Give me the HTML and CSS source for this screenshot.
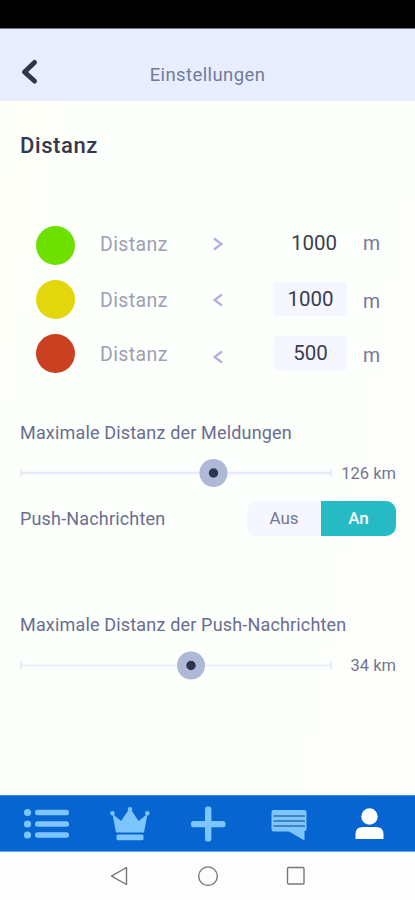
FILE: index.html
```html
<!DOCTYPE html>
<html lang="de">
<head>
<meta charset="utf-8">
<title>Einstellungen</title>
<link rel="stylesheet" href="styles.css">
</head>
<body>
<div class="screen">
  <div class="statusbar"></div>
  <header class="header">
    <svg class="back" width="20" height="28" viewBox="0 0 20 28"><path d="M15.500 4.500L5.500 14L15.500 23"/></svg>
    <h1 class="title">Einstellungen</h1>
  </header>
  <main class="content">
    <h2 class="heading">Distanz</h2>
    <section class="levels">
      <div class="level level-far">
        <span class="dot green"></span><span class="name">Distanz</span>
        <svg class="sign" width="10" height="14" viewBox="0 0 10 14"><path d="M1 1.500L8.500 7L1 12.500"/></svg>
        <span class="value">1000</span><span class="unit">m</span>
      </div>
      <div class="level level-mid">
        <span class="dot yellow"></span><span class="name">Distanz</span>
        <svg class="sign" width="10" height="14" viewBox="0 0 10 14"><path d="M9 1.500L1.500 7L9 12.500"/></svg>
        <span class="value field">1000</span><span class="unit">m</span>
      </div>
      <div class="level level-near">
        <span class="dot red"></span><span class="name">Distanz</span>
        <svg class="sign" width="10" height="14" viewBox="0 0 10 14"><path d="M9 1.500L1.500 7L9 12.500"/></svg>
        <span class="value field">500</span><span class="unit">m</span>
      </div>
    </section>
    <p class="label label-reports">Maximale Distanz der Meldungen</p>
    <div class="slider">
      <svg class="track" width="312" height="30" viewBox="0 0 312 30"><path class="line wide" d="M1 15H311"/><path class="tick" d="M1 11V19M311 11V19"/><circle class="knob" cx="193.500" cy="15" r="14"/><circle class="core" cx="193.500" cy="15" r="4.700"/></svg>
      <span class="amount">126 km</span>
    </div>
    <div class="push">
      <span class="label label-push">Push-Nachrichten</span>
      <div class="toggle"><span class="off">Aus</span><span class="on">An</span></div>
    </div>
    <p class="label label-range">Maximale Distanz der Push-Nachrichten</p>
    <div class="slider">
      <svg class="track" width="312" height="30" viewBox="0 0 312 30"><path class="line" d="M1 15.500H311"/><path class="tick" d="M1 11.500V19.500M311 11.500V19.500"/><circle class="knob" cx="171" cy="15.500" r="14"/><circle class="core" cx="171" cy="15.500" r="4.700"/></svg>
      <span class="amount">34 km</span>
    </div>
  </main>
  <nav class="tabs">
    <svg width="415" height="57" viewBox="0 0 415 57">
      <g class="soft">
        <circle cx="27.500" cy="16.500" r="3.600"/><circle cx="27.500" cy="28" r="3.600"/><circle cx="27.500" cy="39" r="3.600"/>
        <rect x="35" y="13.700" width="34" height="5.600" rx="2.500"/><rect x="35" y="25.200" width="34" height="5.600" rx="2.500"/><rect x="35" y="36.200" width="34" height="5.600" rx="2.500"/>
        <path d="M116 36.500L112.500 18L121 25L130 12L138.500 25L147.500 18L144 36.500Z"/>
        <circle cx="112.500" cy="17.300" r="2.200"/><circle cx="130" cy="13.200" r="2.200"/><circle cx="147.300" cy="17.300" r="2.200"/>
        <rect x="116.500" y="38.500" width="27" height="5.700" rx="1.500"/>
        <rect x="205" y="10.500" width="6.400" height="35" rx="2.500"/><rect x="191" y="25" width="34.500" height="6.200" rx="2.500"/>
        <path d="M273.500 14H304.500Q306.500 14 306.500 16V33Q306.500 35 304.500 35V44.500L289 35.500H273.500Q271.500 35.500 271.500 33.500V16Q271.500 14 273.500 14Z"/>
      </g>
      <path class="lines" d="M273.500 20H305M273.500 25H305M273.500 30H305"/>
      <g class="active"><circle cx="369.500" cy="20.500" r="8.200"/><path d="M355.500 43V38Q355.500 31 363 31H376Q383.500 31 383.500 38V43Z"/></g>
    </svg>
  </nav>
  <footer class="system">
    <svg width="415" height="48" viewBox="0 0 415 48"><path d="M126.500 15.500V32.500L111.500 24.200Z"/><circle cx="208" cy="24.200" r="9.300"/><rect x="287.500" y="15.500" width="16.500" height="16.500" rx="1"/></svg>
  </footer>
</div>
</body>
</html>
```
FILE: styles.css
```css
* { box-sizing: border-box; }
body { margin: 0; font-family: Roboto, sans-serif; }
h1, h2, p { margin: 0; font-weight: 400; }
svg { display: block; }
.screen { width: 415px; height: 900px; display: flex; flex-direction: column; background: #fdfffc; overflow: hidden; }
.statusbar { height: 29px; background: #000; border-bottom: 1px solid #77757f; }
.header { height: 72px; background: #e8eeff; display: grid; grid-template-columns: 44px 1fr 44px; }
.back { margin: 29px 0 0 19px; fill: none; stroke: #30364a; stroke-width: 5; stroke-linecap: round; stroke-linejoin: round; }
.title { margin-top: 34px; text-align: center; font-size: 18.5px; line-height: 24px; letter-spacing: 0.4px; color: #727b96; }
.content { flex: 1; display: flex; flex-direction: column; padding: 0 19px 0 20px; background: linear-gradient(100deg, #fcfff5 0, #fdfffc 20%, #fdfffd 80%, #fdfef8 100%); }
.heading { margin-top: 31px; font-size: 22px; line-height: 28px; font-weight: 500; letter-spacing: 0.6px; color: #33384f; }
.levels { margin: 58px 0 0 16px; }
.level { height: 54px; display: grid; grid-template-columns: 64px 113px 61px 73px 16px 20px; align-items: center; }
.dot { width: 39px; height: 39px; border-radius: 50%; }
.green { background: #6ee000; }
.yellow { background: #e2d70a; }
.red { background: #ca4020; }
.name { font-size: 19.5px; letter-spacing: 0.4px; color: #9c9fb2; }
.sign { fill: none; stroke: #adb0dc; stroke-width: 2.2; }
.value { height: 34px; line-height: 34px; text-align: center; font-size: 20.5px; color: #3b3d4b; }
.field { background: #f5f6ff; border-radius: 3px; }
.unit { grid-column: 6; font-size: 19.5px; color: #73789a; }
.level-far .value { padding: 0 0 0 7px; margin-bottom: 4px; }
.level-far .name { margin-bottom: 2px; }
.level-far .sign { margin-bottom: 2px; }
.level-far .unit { margin-bottom: 4px; }
.level-mid .name, .level-mid .sign { margin-top: 2px; }
.level-mid .unit { margin-top: 4px; }
.level-near .name { margin-top: 2px; }
.level-near .sign { margin-top: 7px; }
.level-near .unit { margin-top: 4px; }
.label { font-size: 18px; line-height: 24px; letter-spacing: 0.17px; color: #696e90; white-space: nowrap; }
.label-reports { margin-top: 41px; }
.slider { display: flex; align-items: center; justify-content: space-between; height: 30px; margin-top: 13px; }
.line { stroke: #e8eafb; stroke-width: 1.6; }
.wide { stroke-width: 2.4; }
.tick { stroke: #e3e6f9; stroke-width: 1.5; }
.knob { fill: #aeb9d8; }
.core { fill: #2c354e; }
.amount { font-size: 16.5px; color: #73778e; white-space: nowrap; }
.push { display: flex; align-items: center; justify-content: space-between; height: 35px; margin-top: 13px; }
.toggle { display: grid; grid-template-columns: 74px 75px; height: 35px; line-height: 35px; text-align: center; font-size: 17px; border-radius: 10px; overflow: hidden; }
.off { background: #f5f6ff; color: #73778e; }
.on { background: #26bac5; color: #fff; font-weight: 500; }
.label-range { margin-top: 77px; }
.tabs { height: 57px; background: #0765d1; border-top: 1px solid #3b8ce4; border-bottom: 1px solid #6aaaf0; }
.soft { fill: #7cc5ff; }
.lines { fill: none; stroke: #4583bd; stroke-width: 1.8; }
.active { fill: #fff; }
.system { height: 48px; background: #fdfdfd; }
.system svg { fill: none; stroke: #777; stroke-width: 1.4; stroke-linejoin: round; }
```
